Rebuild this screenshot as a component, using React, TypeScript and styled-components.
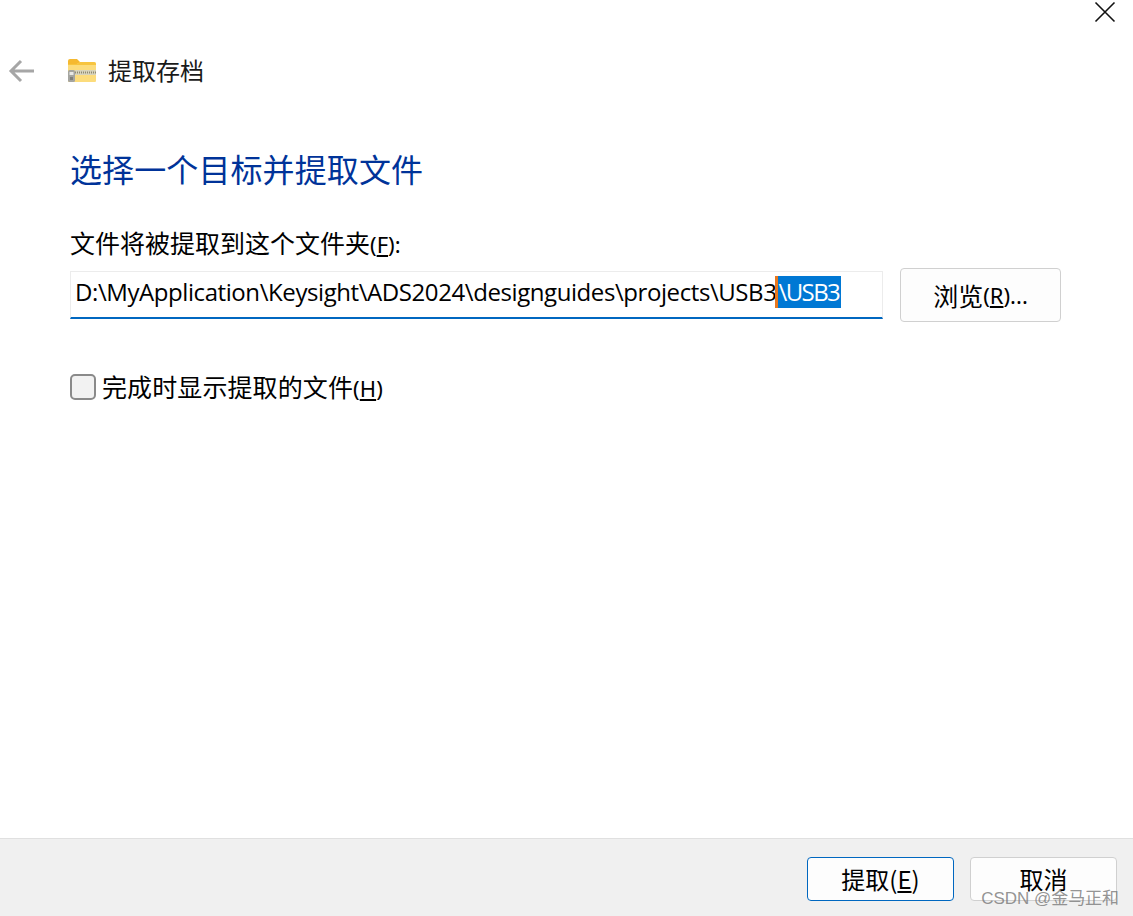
import React from "react";
import styled, { createGlobalStyle } from "styled-components";

const Global = createGlobalStyle`
  html, body { margin: 0; padding: 0; background: #fff; }
  body { font-family: "Open Sans", "Noto Sans CJK SC", sans-serif; color: #000; }
  #root { height: 916px; overflow: hidden; }
`;
const CJK = `"Noto Sans CJK SC", "Noto Sans", sans-serif`;
const LATIN = `"Noto Sans", "Noto Sans CJK SC", sans-serif`;

const Dialog = styled.div`
  position: relative;
  width: 1133px;
  height: 916px;
  display: flex;
  flex-direction: column;
  background: #fff;
`;
const CloseButton = styled.button`
  position: absolute;
  top: 0;
  right: 16px;
  width: 24px;
  height: 24px;
  padding: 0;
  border: 0;
  background: none;
  display: flex;
  align-items: center;
  justify-content: center;
`;
const Main = styled.div`
  flex: 1;
  display: flex;
  flex-direction: column;
`;
const Header = styled.div`
  height: 28px;
  margin-top: 56px;
  padding-left: 8px;
  display: flex;
  align-items: center;
`;
const BackIcon = styled.svg`
  width: 28px;
  height: 24px;
  flex: none;
  margin-top: 2px;
`;
const FolderIcon = styled.svg`
  width: 30px;
  height: 26px;
  margin-left: 31px;
  flex: none;
  margin-top: 4px;
`;
const HeaderTitle = styled.span`
  margin-left: 11px;
  font: 400 24px/28px ${CJK};
  color: #1a1a1a;
`;
const Body = styled.div`
  padding: 62px 72px 0 70px;
  display: flex;
  flex-direction: column;
`;
const Heading = styled.h1`
  margin: 0;
  font: 400 32px/44px ${CJK};
  color: #003399;
  letter-spacing: 0.1px;
`;
const FieldLabel = styled.label`
  margin-top: 35px;
  font: 400 25px/34px ${CJK};
  color: #000;
  display: block;
`;
const Mnemonic = styled.span`
  font-family: ${LATIN};
  font-size: 22px;
  & u { text-underline-offset: 2px; }
`;
const PathRow = styled.div`
  margin-top: 7px;
  display: flex;
  align-items: flex-start;
  gap: 17px;
`;
const PathInput = styled.div`
  width: 813px;
  height: 48px;
  box-sizing: border-box;
  margin-top: 3px;
  border: 1px solid #ececec;
  border-bottom: 2px solid #0067c0;
  padding: 0 0 6px 4px;
  display: flex;
  align-items: center;
  white-space: nowrap;
  font: 400 24px/34px "Open Sans", "Noto Sans", sans-serif;
  letter-spacing: -0.42px;
`;
const Selection = styled.span`
  background: #0078d4;
  color: #fff;
  height: 32px;
  line-height: 32px;
  border-left: 3px solid #e8781f;
  margin-left: -1px;
  letter-spacing: -1.6px;
  padding-right: 2px;
`;
const Button = styled.button<{ $primary?: boolean; $w: number; $h: number; $large?: boolean }>`
  width: ${(p) => p.$w}px;
  height: ${(p) => p.$h}px;
  box-sizing: border-box;
  background: #fdfdfd;
  border: 1px solid ${(p) => (p.$primary ? "#0067c0" : "#d0d0d0")};
  border-radius: 4px;
  padding: 0;
  font: 400 ${(p) => (p.$large ? 25 : 24)}px/32px ${CJK};
  color: #000;
  display: flex;
  align-items: center;
  justify-content: center;
`;
const CheckRow = styled.div`
  margin-top: 48px;
  display: flex;
  align-items: center;
  gap: 6px;
  height: 34px;
`;
const CheckBox = styled.span`
  width: 26px;
  height: 26px;
  box-sizing: border-box;
  border: 2px solid #8a8a8a;
  border-radius: 5px;
  background: #f2f2f2;
  flex: none;
`;
const CheckText = styled.span`
  font: 400 25px/34px ${CJK};
  letter-spacing: 0.1px;
`;
const Footer = styled.div`
  height: 78px;
  box-sizing: border-box;
  background: #f0f0f0;
  border-top: 1px solid #e0e0e0;
  padding: 18px 16px 0 0;
  display: flex;
  justify-content: flex-end;
  gap: 16px;
`;
const Watermark = styled.div`
  position: absolute;
  right: 14px;
  bottom: 6px;
  font: 400 17px/22px "Liberation Sans", "Noto Sans CJK SC", sans-serif;
  letter-spacing: -0.05px;
  color: rgba(120, 120, 120, 0.8);
`;

export default function App() {
  return (
    <Dialog>
      <Global />
      <CloseButton aria-label="关闭">
        <svg width="24" height="24" viewBox="0 0 24 24">
          <path d="M2.5 2.5 21.5 21.5M21.5 2.5 2.5 21.5" stroke="#111" strokeWidth="1.6" fill="none" />
        </svg>
      </CloseButton>
      <Main>
        <Header>
          <BackIcon viewBox="0 0 28 24">
            <path d="M3 12H26M13 2 3 12 13 22" stroke="#a6a6a6" strokeWidth="3" fill="none" />
          </BackIcon>
          <FolderIcon viewBox="0 0 30 26">
            <path d="M1 2a2 2 0 0 1 2-2h7l3 3v3H1z" fill="#f5b930" />
            <path d="M1 5h9l3-2h14a2 2 0 0 1 2 2v17a1 1 0 0 1-1 1H2a1 1 0 0 1-1-1z" fill="#fcdc7c" />
            <path d="M1 5h9l3-2h14a2 2 0 0 1 2 2v1H1z" fill="#f7c43f" />
            <rect x="8" y="11" width="21" height="5" fill="#d8d4bc" />
            <path d="M8 13.5h21" stroke="#8f8a72" strokeWidth="2" strokeDasharray="1 1" />
            <rect x="1" y="11" width="7" height="12" rx="1.5" fill="#a5a5a0" />
            <rect x="2.5" y="13" width="4" height="3" fill="#e8e8e4" />
            <rect x="3" y="18" width="3" height="3" fill="#7f7f7a" />
          </FolderIcon>
          <HeaderTitle>提取存档</HeaderTitle>
        </Header>
        <Body>
          <Heading>选择一个目标并提取文件</Heading>
          <FieldLabel>
            文件将被提取到这个文件夹<Mnemonic>(<u>F</u>):</Mnemonic>
          </FieldLabel>
          <PathRow>
            <PathInput>
              D:\MyApplication\Keysight\ADS2024\designguides\projects\USB3
              <Selection>\USB3</Selection>
            </PathInput>
            <Button $w={161} $h={54} $large>
              浏览<Mnemonic>(<u>R</u>)...</Mnemonic>
            </Button>
          </PathRow>
          <CheckRow>
            <CheckBox />
            <CheckText>
              完成时显示提取的文件<Mnemonic>(<u>H</u>)</Mnemonic>
            </CheckText>
          </CheckRow>
        </Body>
      </Main>
      <Footer>
        <Button $primary $w={147} $h={44}>
          提取(<u>E</u>)
        </Button>
        <Button $w={147} $h={44}>
          取消
        </Button>
      </Footer>
      <Watermark>CSDN @金马正和</Watermark>
    </Dialog>
  );
}
